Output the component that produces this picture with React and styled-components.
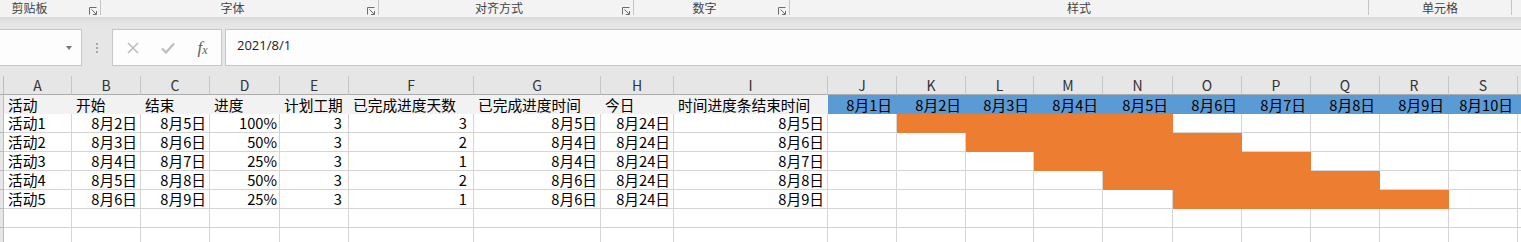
import React from "react";
import styled, { createGlobalStyle } from "styled-components";

const GRID = "#d4d4d4";
const BLUE = "#5b9bd5";
const ORANGE = "#ed7d31";
const TITLE_BG = "#f2f2f2";
const CJK = `"Noto Sans CJK SC", "Noto Sans", sans-serif`;

const colWidths = [68, 69, 69, 70, 69, 125, 127, 73, 154, 69, 69, 68, 69, 70, 69, 69, 69, 69, 69];
const letters = "ABCDEFGHIJKLMNOPQRST".split("");

const ribbonGroups = [
  { label: "剪贴板", width: 128, offset: -27, launcher: true },
  { label: "字体", width: 278, launcher: true },
  { label: "对齐方式", width: 255, launcher: true },
  { label: "数字", width: 156, launcher: true },
  { label: "样式", width: 579 },
  { label: "单元格", width: 143 },
];

const titles = ["活动", "开始", "结束", "进度", "计划工期", "已完成进度天数", "已完成进度时间", "今日", "时间进度条结束时间"];
const days = ["8月1日", "8月2日", "8月3日", "8月4日", "8月5日", "8月6日", "8月7日", "8月8日", "8月9日", "8月10日"];

const tasks = [
  ["活动1", "8月2日", "8月5日", "100%", "3", "3", "8月5日", "8月24日", "8月5日"],
  ["活动2", "8月3日", "8月6日", "50%", "3", "2", "8月4日", "8月24日", "8月6日"],
  ["活动3", "8月4日", "8月7日", "25%", "3", "1", "8月4日", "8月24日", "8月7日"],
  ["活动4", "8月5日", "8月8日", "50%", "3", "2", "8月6日", "8月24日", "8月8日"],
  ["活动5", "8月6日", "8月9日", "25%", "3", "1", "8月6日", "8月24日", "8月9日"],
];

// right padding per data column (A..I)
const pads = [0, 3, 3, 2, 6, 6, 3, 3, 3];

const GlobalStyle = createGlobalStyle`
  body {
    margin: 0;
    width: 1521px;
    height: 242px;
    overflow: hidden;
    background: #fff;
    font-family: ${CJK};
  }
`;

const Launcher = () => (
  <svg width="8" height="8" viewBox="0 0 8 8">
    <path d="M0.5 7.5V0.5H7.5" fill="none" stroke="#6d6d6d" strokeWidth="1" />
    <path d="M2.5 2.5L7 7" fill="none" stroke="#6d6d6d" strokeWidth="1" />
    <path d="M7.5 4V7.5H4" fill="none" stroke="#6d6d6d" strokeWidth="1" />
  </svg>
);

const CancelIcon = () => (
  <svg width="12" height="12" viewBox="0 0 12 12">
    <path d="M1 1L11 11M11 1L1 11" stroke="#bdbdbd" strokeWidth="1.6" fill="none" />
  </svg>
);

const EnterIcon = () => (
  <svg width="14" height="12" viewBox="0 0 14 12">
    <path d="M1 6.5L5 10.5L13 1.5" stroke="#bdbdbd" strokeWidth="2.2" fill="none" />
  </svg>
);

const App = () => {
  const template = `4px ${colWidths.map((w) => w + "px").join(" ")} 1fr`;

  return (
    <>
      <GlobalStyle />
      <Ribbon>
        {ribbonGroups.map((g) => (
          <Group key={g.label} $width={g.width} $offset={g.offset || 0}>
            <GroupLabel>{g.label}</GroupLabel>
            {g.launcher && (
              <LauncherSlot>
                <Launcher />
              </LauncherSlot>
            )}
          </Group>
        ))}
      </Ribbon>
      <ShadowBand />
      <FormulaRow>
        <NameBox>
          <DropArrow />
        </NameBox>
        <Grip>
          <Dot />
          <Dot />
          <Dot />
        </Grip>
        <ButtonBox>
          <IconSlot>
            <CancelIcon />
          </IconSlot>
          <IconSlot>
            <EnterIcon />
          </IconSlot>
          <IconSlot>
            <Fx>
              f<sub>x</sub>
            </Fx>
          </IconSlot>
        </ButtonBox>
        <FormulaInput>2021/8/1</FormulaInput>
      </FormulaRow>
      <Gap />
      <Viewport>
        <Sheet style={{ gridTemplateColumns: template }}>
          <Corner />
          {letters.map((l, i) => (
            <ColHead key={l}>{i < 19 ? l : ""}</ColHead>
          ))}

          <RowHead $tall />
          {titles.map((t) => (
            <Cell key={t} $fill={TITLE_BG} $tall>
              {t}
            </Cell>
          ))}
          {days.map((d) => (
            <Cell key={d} $fill={BLUE} $align="right" $pad={4} $tall>
              {d}
            </Cell>
          ))}
          <Cell $fill={BLUE} $tall />

          {tasks.map((row, i) => (
            <React.Fragment key={row[0]}>
              <RowHead />
              {row.map((v, j) => (
                <Cell key={j} $align={j === 0 ? "left" : "right"} $pad={pads[j]}>
                  {v}
                </Cell>
              ))}
              {days.map((d, j) => (
                <Cell key={d} $fill={j >= i + 1 && j <= i + 4 ? ORANGE : null} />
              ))}
              <Cell />
            </React.Fragment>
          ))}

          {[0, 1, 2].map((r) => (
            <React.Fragment key={r}>
              <RowHead />
              {letters.map((l) => (
                <Cell key={l} />
              ))}
            </React.Fragment>
          ))}
        </Sheet>
      </Viewport>
    </>
  );
};

export default App;

const Ribbon = styled.div`
  display: flex;
  align-items: flex-start;
  height: 17px;
  background: #f3f3f3;
  overflow: hidden;
`;

const Group = styled.div`
  flex: none;
  display: flex;
  width: ${(p) => p.$width}px;
  margin-left: ${(p) => p.$offset}px;
  height: 15px;
  border-right: 1px solid #c8c6c4;
  box-sizing: border-box;
`;

const GroupLabel = styled.div`
  flex: 1;
  text-align: center;
  font-size: 12px;
  line-height: 15px;
  color: #444;
  white-space: nowrap;
`;

const LauncherSlot = styled.div`
  width: 14px;
  display: flex;
  justify-content: center;
  align-items: flex-end;
`;

const ShadowBand = styled.div`
  height: 12px;
  background: linear-gradient(#d9d9d9, #e4e4e4 50%, #e6e6e6);
`;

const FormulaRow = styled.div`
  display: flex;
  height: 37px;
  background: #e6e6e6;
`;

const NameBox = styled.div`
  width: 83px;
  margin-left: -1px;
  box-sizing: border-box;
  background: #fdfdfd;
  border: 1px solid #c6c6c6;
  display: flex;
  align-items: center;
  justify-content: flex-end;
  padding-right: 9px;
`;

const DropArrow = styled.div`
  width: 0;
  height: 0;
  border-left: 3.5px solid transparent;
  border-right: 3.5px solid transparent;
  border-top: 4px solid #777;
`;

const Grip = styled.div`
  width: 30px;
  display: flex;
  flex-direction: column;
  align-items: center;
  justify-content: center;
  gap: 2px;
`;

const Dot = styled.div`
  width: 2px;
  height: 2px;
  background: #a8a8a8;
`;

const ButtonBox = styled.div`
  width: 110px;
  box-sizing: border-box;
  background: #fdfdfd;
  border: 1px solid #c6c6c6;
  display: flex;
  padding-left: 2px;
`;

const IconSlot = styled.div`
  width: 35px;
  display: flex;
  align-items: center;
  justify-content: center;
`;

const Fx = styled.span`
  font-family: "Liberation Serif", "DejaVu Serif", serif;
  font-style: italic;
  font-size: 17px;
  color: #606060;
  line-height: 1;
  sub {
    font-size: 12px;
    vertical-align: -1px;
  }
`;

const FormulaInput = styled.div`
  flex: 1;
  margin-left: 3px;
  margin-right: -2px;
  box-sizing: border-box;
  background: #fdfdfd;
  border: 1px solid #c6c6c6;
  padding: 6px 11px;
  font-family: "Open Sans", "Noto Sans", sans-serif;
  font-size: 13px;
  line-height: 18px;
  color: #222;
`;

const Gap = styled.div`
  height: 10px;
  background: #e6e6e6;
`;

const Viewport = styled.div`
  height: 166px;
  overflow: hidden;
`;

const Sheet = styled.div`
  display: grid;
  grid-auto-rows: 19px;
  font-size: 14.7px;
  color: #000;
`;

const Corner = styled.div`
  background: #e6e6e6;
  border-right: 1px solid #bcbcbc;
  border-bottom: 1px solid #ababab;
`;

const ColHead = styled.div`
  background: #e6e6e6;
  border-right: 1px solid #c6c6c6;
  border-bottom: 1px solid #ababab;
  display: flex;
  align-items: center;
  justify-content: center;
  font-size: 14px;
  color: #333;
`;

const RowHead = styled.div`
  background: #e6e6e6;
  border-right: 1px solid #bcbcbc;
  border-bottom: 1px solid #bcbcbc;
  height: ${(p) => (p.$tall ? 20 : 19)}px;
  box-sizing: border-box;
`;

const Cell = styled.div`
  box-sizing: border-box;
  height: ${(p) => (p.$tall ? 20 : 19)}px;
  background: ${(p) => p.$fill || "#fff"};
  border-right: 1px solid ${(p) => p.$fill || GRID};
  border-bottom: 1px solid ${(p) => p.$fill || GRID};
  display: flex;
  align-items: center;
  justify-content: ${(p) => (p.$align === "right" ? "flex-end" : "flex-start")};
  padding: 0 ${(p) => p.$pad || 0}px 0 4px;
  white-space: nowrap;
  line-height: 18px;
`;
